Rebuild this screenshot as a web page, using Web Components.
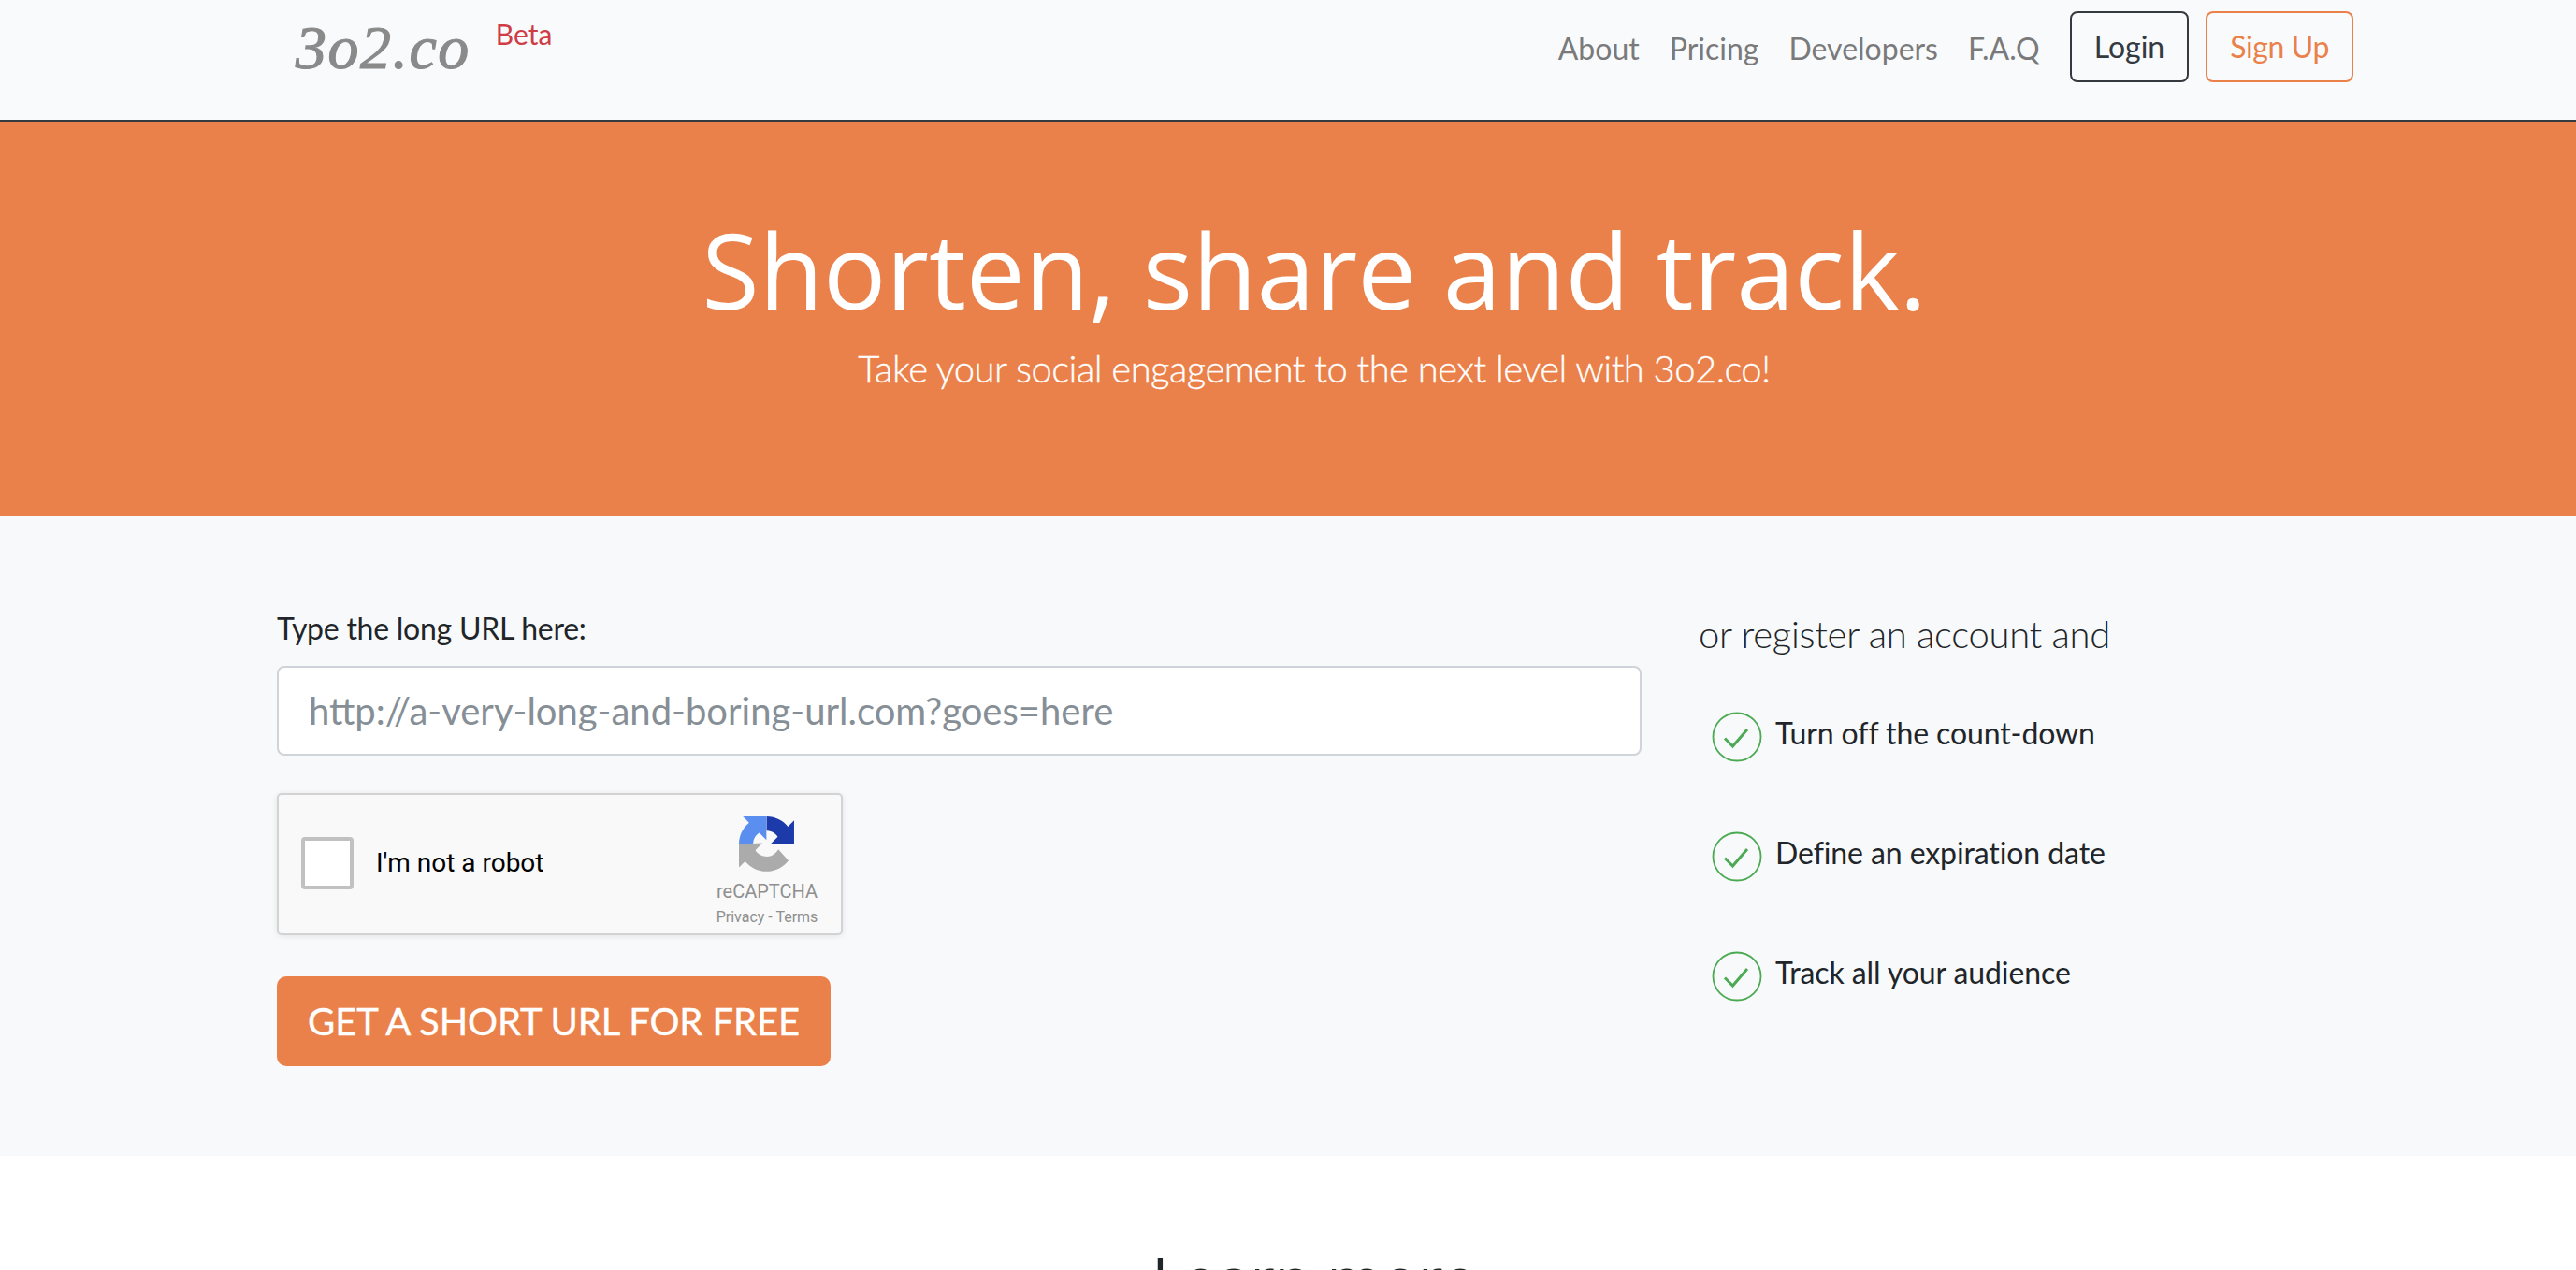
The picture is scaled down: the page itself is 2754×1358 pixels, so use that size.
<!DOCTYPE html>
<html lang="en">
<head>
<meta charset="utf-8">
<title>3o2.co</title>
<style>
  html, body { margin: 0; height: 1358px; overflow: hidden; background: #fff; }
  body { font-family: Lato, "Liberation Sans", sans-serif; color: #212529; }
</style>
</head>
<body>
<site-header></site-header>
<hero-banner heading="Shorten, share and track." lead="Take your social engagement to the next level with 3o2.co!"></hero-banner>
<main-section>
  <url-form slot="form"></url-form>
  <feature-list slot="side" title="or register an account and">
    <feature-item>Turn off the count-down</feature-item>
    <feature-item>Define an expiration date</feature-item>
    <feature-item>Track all your audience</feature-item>
  </feature-list>
</main-section>
<learn-more></learn-more>

<script>
class SiteHeader extends HTMLElement {
  constructor() {
    super();
    this.shadowDOM = this.attachShadow({ mode: 'open' });
  }

  connectedCallback() {
    this.shadowDOM.innerHTML = `
      <style>
        :host {
          display: flex;
          justify-content: space-between;
          box-sizing: border-box;
          height: 130px;
          padding: 12px 238px 0 316px;
          background: #f9fafc;
          border-bottom: 2px solid #343a40;
        }
        .brand { display: flex; align-items: flex-start; }
        .logo {
          font: italic 400 66px/66px "Liberation Serif", serif;
          color: #8a8a8a;
          letter-spacing: 1.5px;
          -webkit-text-stroke: 1.2px #8a8a8a;
          margin-top: 6px;
        }
        .beta {
          font-size: 30px;
          line-height: 34px;
          color: #cf3c46;
          margin: 7px 0 0 27px;
        }
        nav { display: flex; align-items: flex-start; }
        nav a {
          font-size: 32px;
          line-height: 48px;
          padding: 16px 16px;
          color: #7a7a7b;
          text-decoration: none;
        }
        .btn {
          box-sizing: border-box;
          height: 76px;
          font-size: 32px;
          line-height: 48px;
          padding: 12px 24px;
          border: 2px solid #343a40;
          border-radius: 8px;
          color: #343a40;
          margin-left: 16px;
        }
        .btn.signup { border-color: #eb814a; color: #eb814a; margin-left: 18px; letter-spacing: -.4px; }
      </style>
      <div class="brand">
        <span class="logo">3o2.co</span>
        <span class="beta">Beta</span>
      </div>
      <nav>
        <a href="#">About</a>
        <a href="#">Pricing</a>
        <a href="#">Developers</a>
        <a href="#">F.A.Q</a>
        <span class="btn">Login</span>
        <span class="btn signup">Sign Up</span>
      </nav>
    `;
  }
}

class HeroBanner extends HTMLElement {
  constructor() {
    super();
    this.shadowDOM = this.attachShadow({ mode: 'open' });
  }

  connectedCallback() {
    this.shadowDOM.innerHTML = `
      <style>
        :host {
          display: block;
          box-sizing: border-box;
          height: 422px;
          padding: 91px 0 0 56px;
          background: #eb814a;
          color: #fff;
          text-align: center;
        }
        h1 {
          margin: 0 0 9px;
          font: 400 112px/134px "Open Sans", sans-serif;
          letter-spacing: -.15px;
        }
        p {
          margin: 0;
          font: 300 40px/60px Lato, sans-serif;
          letter-spacing: -.55px;
          -webkit-text-stroke: .3px #fff;
        }
      </style>
      <h1>${this.getAttribute('heading')}</h1>
      <p>${this.getAttribute('lead')}</p>
    `;
  }
}

class MainSection extends HTMLElement {
  constructor() {
    super();
    this.shadowDOM = this.attachShadow({ mode: 'open' });
  }

  connectedCallback() {
    this.shadowDOM.innerHTML = `
      <style>
        :host {
          display: grid;
          grid-template-columns: 1459px 1fr;
          column-gap: 61px;
          box-sizing: border-box;
          height: 684px;
          padding: 96px 0 0 296px;
          background: #f8f9fa;
        }
      </style>
      <slot name="form"></slot>
      <slot name="side"></slot>
    `;
  }
}

class UrlForm extends HTMLElement {
  constructor() {
    super();
    this.shadowDOM = this.attachShadow({ mode: 'open' });
  }

  connectedCallback() {
    this.shadowDOM.innerHTML = `
      <style>
        :host { display: block; }
        label {
          display: block;
          font-size: 32px;
          line-height: 48px;
          letter-spacing: -.25px;
          margin-bottom: 16px;
          color: #212529;
        }
        input {
          display: block;
          box-sizing: border-box;
          width: 100%;
          height: 96px;
          padding: 0 32px;
          font: 40px Lato, sans-serif;
          background: #fff;
          border: 2px solid #ced4da;
          border-radius: 8px;
          outline: none;
        }
        input::placeholder { color: #868e96; opacity: 1; }
        recaptcha-box { margin: 40px 0 44px; }
        button {
          display: block;
          width: 592px;
          height: 96px;
          padding: 0;
          font: 40px Lato, sans-serif;
          letter-spacing: -.1px;
          -webkit-text-stroke: .4px #fff;
          color: #fff;
          background: #eb814a;
          border: 0;
          border-radius: 10px;
        }
      </style>
      <label>Type the long URL here:</label>
      <input type="text" placeholder="http://a-very-long-and-boring-url.com?goes=here">
      <recaptcha-box></recaptcha-box>
      <button type="button">GET A SHORT URL FOR FREE</button>
    `;
  }
}

class RecaptchaBox extends HTMLElement {
  constructor() {
    super();
    this.shadowDOM = this.attachShadow({ mode: 'open' });
  }

  connectedCallback() {
    this.shadowDOM.innerHTML = `
      <style>
        :host {
          display: flex;
          align-items: center;
          box-sizing: border-box;
          width: 605px;
          height: 152px;
          padding: 0 26px 0 24px;
          font-family: Roboto, "Liberation Sans", sans-serif;
          background: #f9f9f9;
          border: 2px solid #d3d3d3;
          border-radius: 5px;
          box-shadow: 0 1px 6px rgba(0, 0, 0, .09);
        }
        .check {
          box-sizing: border-box;
          width: 56px;
          height: 56px;
          background: #fff;
          border: 4px solid #c1c1c1;
          border-radius: 4px;
          margin-top: -2px;
        }
        .text {
          flex: 1;
          margin: -3px 0 0 24px;
          font-size: 28px;
          color: #000;
        }
        .badge {
          display: flex;
          flex-direction: column;
          align-items: center;
          width: 110px;
          margin: 16px -2px 0 0;
          color: #8f8f8f;
        }
        svg { display: block; width: 59px; height: 59px; margin-left: -2px; }
        .name { font-size: 20px; line-height: 24px; margin-top: 9px; white-space: nowrap; }
        .links { font-size: 16px; line-height: 20px; margin-top: 6px; white-space: nowrap; }
      </style>
      <div class="check"></div>
      <div class="text">I'm not a robot</div>
      <div class="badge">
        <svg viewBox="0 0 64 64">
          <path fill="#1c3aa9" d="M64 31.955l-.033-1.37V4.687l-7.16 7.16C50.948 4.674 42.033.093 32.05.093v16.33c.485 0 .86.057 1.135.163 4.976.393 9.288 3.14 11.828 7.124l-8.307 8.307 27.294.338"/>
          <path fill="#5b8fef" d="M31.862 0l-1.37.033H4.594l7.16 7.16C4.58 13.052 0 21.967 0 31.95h16.26c0-.485.057-.86.163-1.135.393-4.976 3.14-9.288 7.124-11.828l8.307 8.307L31.862 0"/>
          <path fill="#ababab" d="M.001 31.95l.033 1.37v25.898l7.16-7.16c5.86 7.173 14.775 11.754 24.76 11.754 10.4 0 19.622-4.96 25.458-12.64L45.676 38.314a15.55 15.55 0 0 1-4.754 5.334c-2.05 1.6-4.952 2.906-8.968 2.906-.485 0-.86-.057-1.135-.163-4.976-.393-9.288-3.14-11.828-7.124l8.307-8.307L.001 31.95"/>
        </svg>
        <div class="name">reCAPTCHA</div>
        <div class="links">Privacy - Terms</div>
      </div>
    `;
  }
}

class FeatureList extends HTMLElement {
  constructor() {
    super();
    this.shadowDOM = this.attachShadow({ mode: 'open' });
  }

  connectedCallback() {
    this.shadowDOM.innerHTML = `
      <style>
        :host { display: block; }
        h3 {
          margin: 0 0 48px;
          font: 300 40px/60px Lato, sans-serif;
          letter-spacing: -.3px;
          color: #212529;
        }
        .items { display: flex; flex-direction: column; gap: 64px; padding-left: 14px; }
      </style>
      <h3>${this.getAttribute('title')}</h3>
      <div class="items"><slot></slot></div>
    `;
  }
}

class FeatureItem extends HTMLElement {
  constructor() {
    super();
    this.shadowDOM = this.attachShadow({ mode: 'open' });
  }

  connectedCallback() {
    this.shadowDOM.innerHTML = `
      <style>
        :host {
          display: flex;
          align-items: center;
          gap: 14px;
          height: 64px;
          font-size: 32px;
          letter-spacing: -.1px;
          color: #212529;
        }
        svg { display: block; width: 54px; height: 54px; flex: none; }
        span { margin-top: -10px; }
      </style>
      <svg viewBox="0 0 54 54" fill="none" stroke="#4caa54">
        <circle cx="27" cy="27" r="25.5" stroke-width="1.8"/>
        <path d="M14 28.5l8.5 8.5L38 19" stroke-width="3"/>
      </svg>
      <span><slot></slot></span>
    `;
  }
}

class LearnMore extends HTMLElement {
  constructor() {
    super();
    this.shadowDOM = this.attachShadow({ mode: 'open' });
  }

  connectedCallback() {
    this.shadowDOM.innerHTML = `
      <style>
        :host { display: block; padding: 92px 0 0 56px; text-align: center; }
        h2 { margin: 0; font: 400 64px/77px "Open Sans", sans-serif; color: #212529; }
      </style>
      <h2>Learn more</h2>
    `;
  }
}

customElements.define('site-header', SiteHeader);
customElements.define('hero-banner', HeroBanner);
customElements.define('main-section', MainSection);
customElements.define('url-form', UrlForm);
customElements.define('recaptcha-box', RecaptchaBox);
customElements.define('feature-list', FeatureList);
customElements.define('feature-item', FeatureItem);
customElements.define('learn-more', LearnMore);
</script>
</body>
</html>
